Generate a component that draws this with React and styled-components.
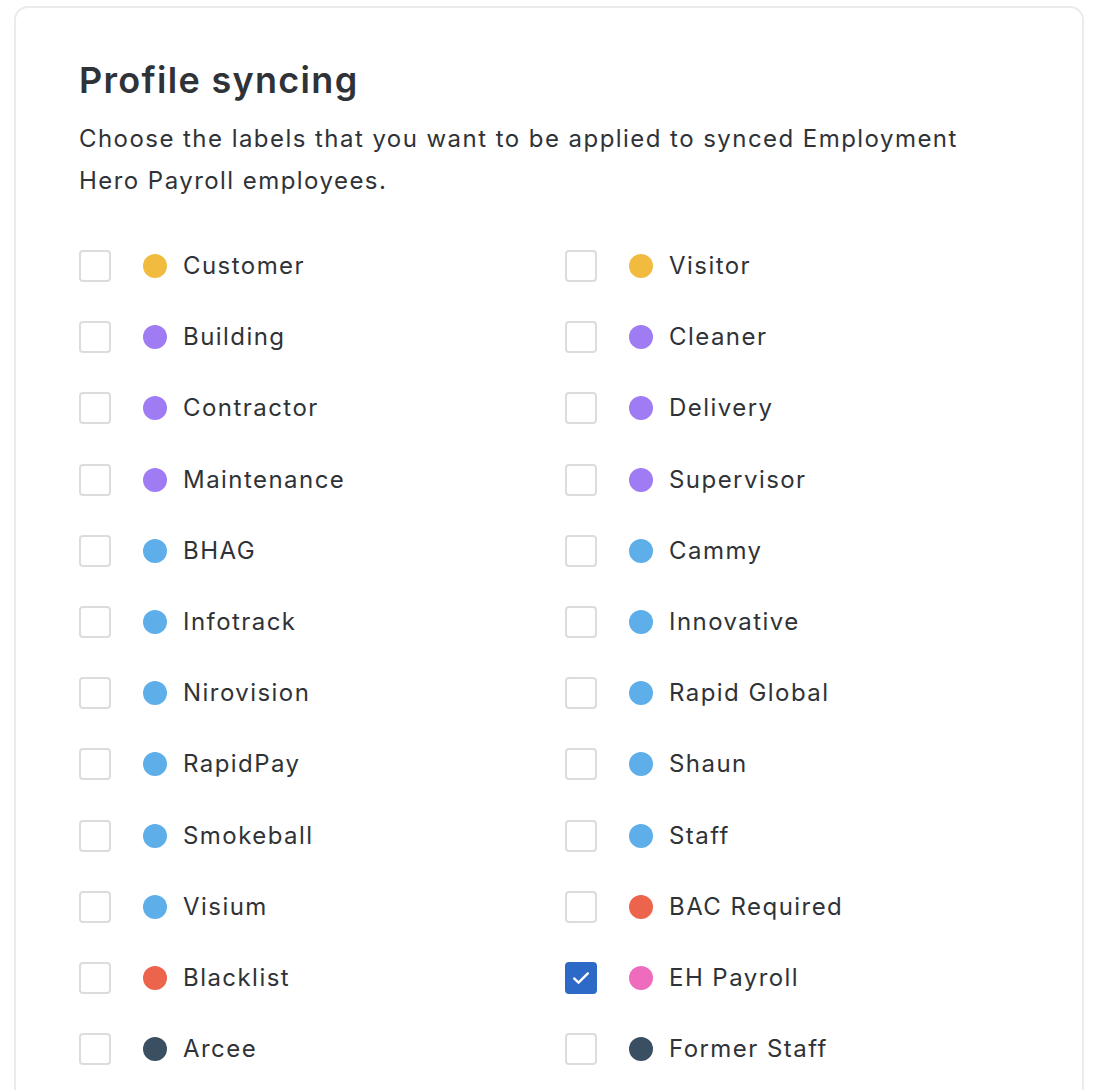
import React, { useState } from "react";
import styled, { createGlobalStyle } from "styled-components";

const GlobalStyle = createGlobalStyle`
  body {
    margin: 0;
    background: #ffffff;
    font-family: "Inter", "Noto Sans", sans-serif;
    color: #2f3338;
  }
`;

const Page = styled.div`
  padding: 6px 22px 0 14px;
`;

const Card = styled.section`
  border: 2px solid #ebebeb;
  border-radius: 14px;
  padding: 50px 62px 60px 63px;
  background: #fff;
`;

const Title = styled.h2`
  margin: 0;
  font-size: 36px;
  line-height: 44px;
  font-weight: 600;
  letter-spacing: 1.3px;
  color: #2f3338;
`;

const Description = styled.p`
  margin: 16px 0 48px;
  font-size: 24px;
  line-height: 42px;
  font-weight: 400;
  letter-spacing: 1.45px;
  max-width: 900px;
  color: #2f3338;
`;

const LabelGrid = styled.div`
  display: grid;
  grid-template-columns: 486px 1fr;
  grid-auto-rows: 32px;
  row-gap: 39.2px;
`;

const Row = styled.label`
  display: flex;
  align-items: center;
  cursor: pointer;
`;

const Box = styled.span`
  width: 32px;
  height: 32px;
  box-sizing: border-box;
  border-radius: 4px;
  border: 2px solid ${({ $checked }) => ($checked ? "#2d69c6" : "#dcdcdc")};
  background: ${({ $checked }) => ($checked ? "#2d69c6" : "#fff")};
  display: flex;
  align-items: center;
  justify-content: center;
  flex-shrink: 0;
`;

const Dot = styled.span`
  width: 24px;
  height: 24px;
  border-radius: 50%;
  background: ${({ $color }) => $color};
  margin-left: 32px;
  margin-right: 16px;
  flex-shrink: 0;
`;

const Name = styled.span`
  font-size: 24px;
  line-height: 32px;
  letter-spacing: 1.45px;
  color: #2f3338;
`;

const colors = {
  yellow: "#f1bb40",
  purple: "#a07cf4",
  blue: "#5eaeea",
  red: "#ec644b",
  pink: "#ee6bbd",
  dark: "#3a4f61",
};

const labels = [
  ["Customer", "yellow"],
  ["Visitor", "yellow"],
  ["Building", "purple"],
  ["Cleaner", "purple"],
  ["Contractor", "purple"],
  ["Delivery", "purple"],
  ["Maintenance", "purple"],
  ["Supervisor", "purple"],
  ["BHAG", "blue"],
  ["Cammy", "blue"],
  ["Infotrack", "blue"],
  ["Innovative", "blue"],
  ["Nirovision", "blue"],
  ["Rapid Global", "blue"],
  ["RapidPay", "blue"],
  ["Shaun", "blue"],
  ["Smokeball", "blue"],
  ["Staff", "blue"],
  ["Visium", "blue"],
  ["BAC Required", "red"],
  ["Blacklist", "red"],
  ["EH Payroll", "pink"],
  ["Arcee", "dark"],
  ["Former Staff", "dark"],
];

function Check() {
  return (
    <svg width="22" height="22" viewBox="0 0 24 24" fill="none">
      <path
        d="M4.5 12.5l4.8 4.6L19.5 7"
        stroke="#fff"
        strokeWidth="2.6"
        strokeLinecap="round"
        strokeLinejoin="round"
      />
    </svg>
  );
}

export default function App() {
  const [selected, setSelected] = useState(["EH Payroll"]);

  const toggle = (name) =>
    setSelected((prev) =>
      prev.includes(name) ? prev.filter((n) => n !== name) : [...prev, name]
    );

  return (
    <Page>
      <GlobalStyle />
      <Card>
        <Title>Profile syncing</Title>
        <Description>
          Choose the labels that you want to be applied to synced Employment
          Hero Payroll employees.
        </Description>
        <LabelGrid>
          {labels.map(([name, color]) => {
            const checked = selected.includes(name);
            return (
              <Row key={name} onClick={() => toggle(name)}>
                <Box $checked={checked}>{checked && <Check />}</Box>
                <Dot $color={colors[color]} />
                <Name>{name}</Name>
              </Row>
            );
          })}
        </LabelGrid>
      </Card>
    </Page>
  );
}
